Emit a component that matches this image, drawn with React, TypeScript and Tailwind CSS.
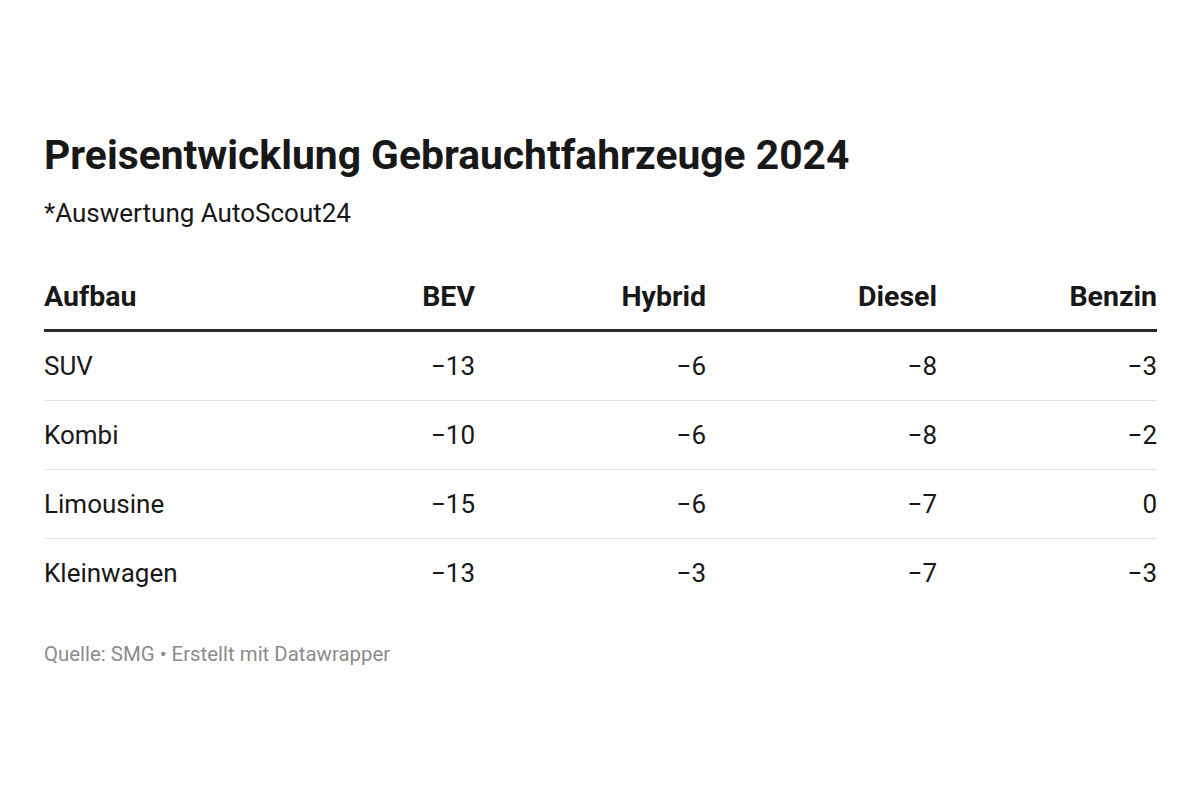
const rows = [
  { name: "SUV", values: ["−13", "−6", "−8", "−3"] },
  { name: "Kombi", values: ["−10", "−6", "−8", "−2"] },
  { name: "Limousine", values: ["−15", "−6", "−7", "0"] },
  { name: "Kleinwagen", values: ["−13", "−3", "−7", "−3"] },
];

const columns = ["BEV", "Hybrid", "Diesel", "Benzin"];

const gridCols = "grid grid-cols-[200px_231px_231px_231px_1fr] items-center";

const App = () => {
  return (
    <div className="min-h-screen w-[1200px] bg-white text-[#181818] font-['Roboto',sans-serif]">
      <div className="pl-[44px] pr-[43px] pt-[135px]">
        <h1 className="text-[40.8px] font-bold leading-none">
          Preisentwicklung Gebrauchtfahrzeuge 2024
        </h1>
        <p className="mt-[24px] text-[26px] leading-none">*Auswertung AutoScout24</p>

        <div className="mt-[57px]">
          <div className={`${gridCols} pb-[18px] border-b-[3px] border-[#2a2a2a]`}>
            <div className="text-[28.5px] font-bold leading-none">Aufbau</div>
            {columns.map((c) => (
              <div key={c} className="text-right text-[28.5px] font-bold leading-none">
                {c}
              </div>
            ))}
          </div>

          {rows.map((row, i) => (
            <div
              key={row.name}
              className={`${gridCols} h-[68px] ${i < rows.length - 1 ? "border-b border-[#e3e3e3] box-content" : ""}`}
            >
              <div className="text-[26px] leading-none">{row.name}</div>
              {row.values.map((v, j) => (
                <div key={j} className="text-right text-[26px] leading-none">
                  {v}
                </div>
              ))}
            </div>
          ))}
        </div>

        <p className="mt-[37px] text-[20.4px] leading-none text-[#8c8c8c]">
          Quelle: SMG • Erstellt mit Datawrapper
        </p>
      </div>
    </div>
  );
};

export default App;
